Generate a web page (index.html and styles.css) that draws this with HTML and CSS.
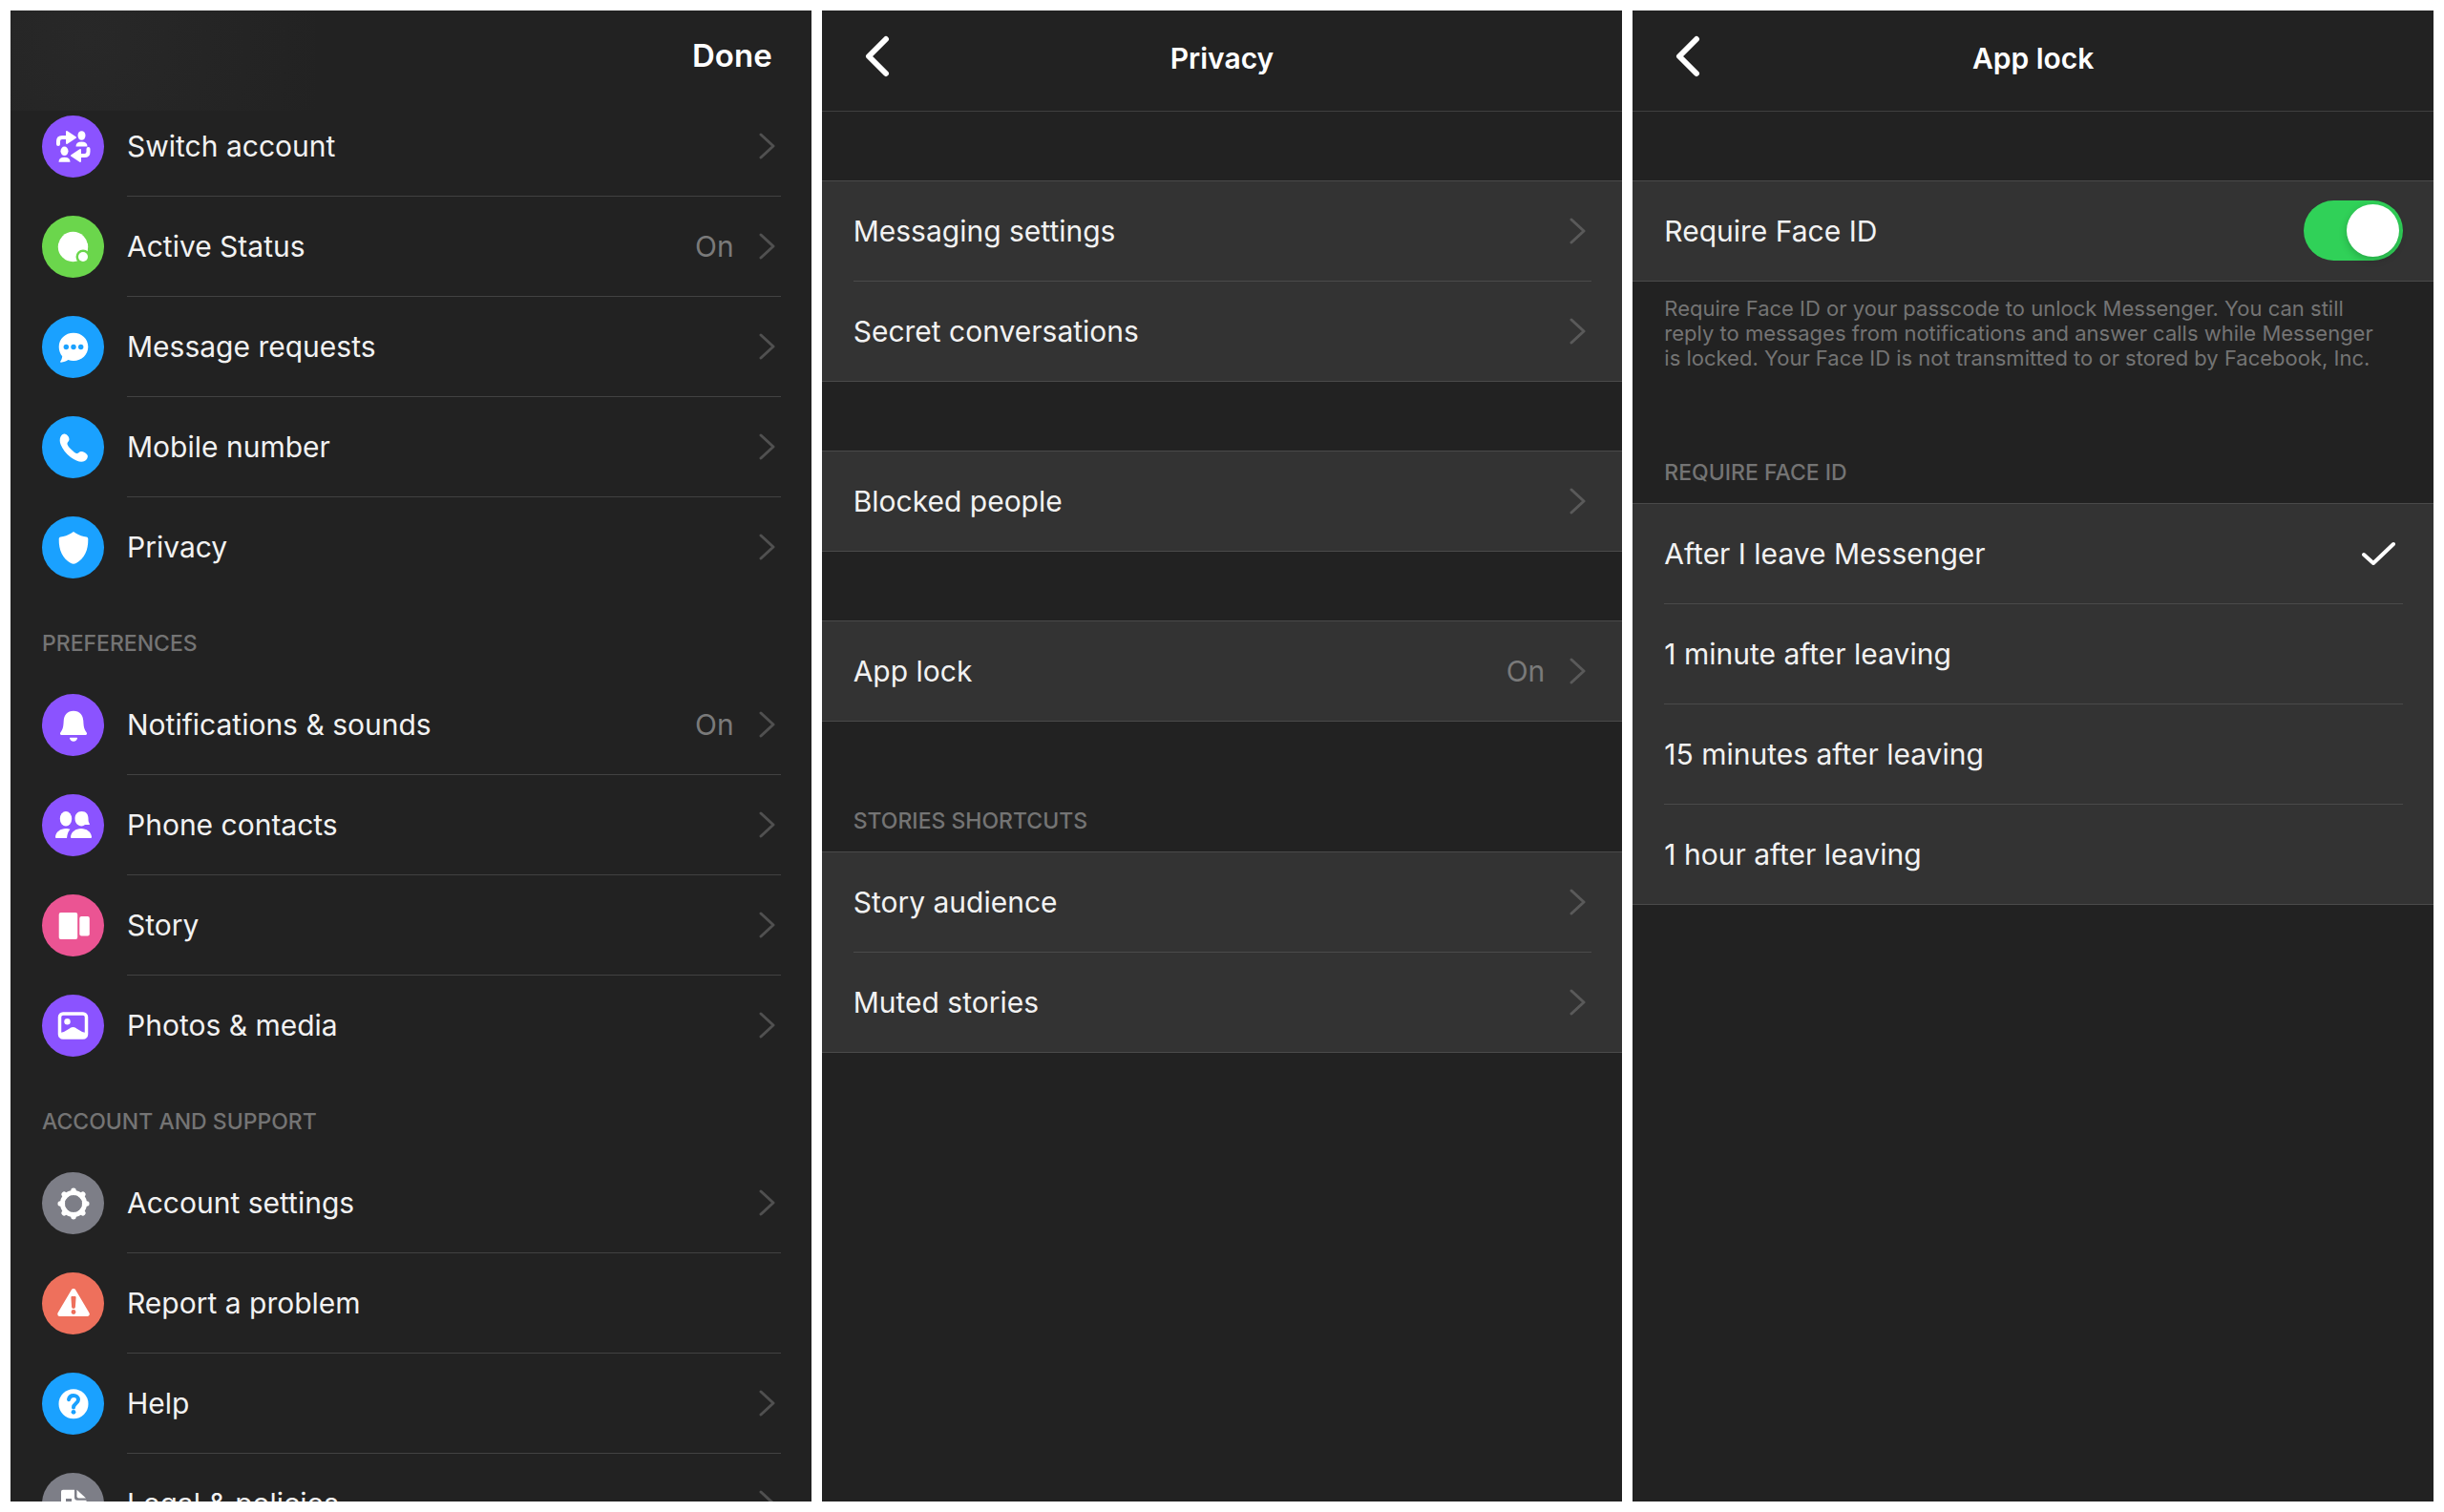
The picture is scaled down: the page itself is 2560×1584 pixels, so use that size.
FILE: index.html
```html
<!DOCTYPE html>
<html lang="en">
<head>
    <meta charset="UTF-8">
    <meta name="viewport" content="width=device-width, initial-scale=1.0">
    <title>Messenger settings</title>
    <link rel="stylesheet" href="styles.css">
</head>
<body>
    <!-- Shared chevron shapes -->
    <svg class="defs" aria-hidden="true">
        <symbol id="chevron" viewBox="0 0 18 28"><path d="M2 2l13 12L2 26" /></symbol>
        <symbol id="back" viewBox="0 0 26 44"><path d="M22 4L4 22l18 18" /></symbol>
    </svg>

    <div class="screens">
        <!-- Main settings -->
        <section class="screen screen-main">
            <header class="main-header">
                <button type="button" class="done">Done</button>
            </header>

            <nav class="list">
                <a class="row" href="#">
                    <svg class="icon purple" viewBox="0 0 65 65">
                        <path d="M17 30v-3q0-4 4-4h7" fill="none" stroke="#fff" stroke-width="4" stroke-linecap="round" />
                        <path d="M26 17l9 6-9 6z" stroke="#fff" stroke-width="2" stroke-linejoin="round" />
                        <ellipse cx="41.5" cy="21" rx="4" ry="4.8" />
                        <path d="M35.5 32.5q0-5 6-5t6 5z" />
                        <ellipse cx="23.5" cy="37.3" rx="4" ry="4.8" />
                        <path d="M17.5 48.7q0-5 6-5t6 5z" />
                        <path d="M48.5 35v3q0 4-4 4h-7" fill="none" stroke="#fff" stroke-width="4" stroke-linecap="round" />
                        <path d="M40 36l-9 6 9 6z" stroke="#fff" stroke-width="2" stroke-linejoin="round" />
                    </svg>
                    <span class="row-body">Switch account
                        <svg class="chevron"><use href="#chevron" /></svg>
                    </span>
                </a>
                <a class="row" href="#">
                    <svg class="icon green" viewBox="0 0 65 65">
                        <circle cx="32.5" cy="32.5" r="15.7" />
                        <circle cx="43" cy="43" r="7.5" class="cut" />
                        <circle cx="43" cy="43" r="5" />
                    </svg>
                    <span class="row-body">Active Status
                        <span class="value">On</span>
                        <svg class="chevron"><use href="#chevron" /></svg>
                    </span>
                </a>
                <a class="row" href="#">
                    <svg class="icon blue" viewBox="0 0 65 65">
                        <path d="M33 17.7c8.7 0 15.3 6.3 15.3 14.6S41.7 47 33 47c-2 0-4-.3-5.600-.9-2 1.300-4.700 2.500-7.500 2.600-.8 0-1-.6-.6-1.200 1-1.300 1.700-3 1.900-5.200-2.200-2.600-3.500-6-3.500-10 0-8.300 6.600-14.600 15.300-14.600z" />
                        <g class="cut">
                            <circle cx="25.3" cy="32.5" r="2.7" />
                            <circle cx="33" cy="32.5" r="2.7" />
                            <circle cx="40.7" cy="32.5" r="2.7" />
                        </g>
                    </svg>
                    <span class="row-body">Message requests
                        <svg class="chevron"><use href="#chevron" /></svg>
                    </span>
                </a>
                <a class="row" href="#">
                    <svg class="icon blue" viewBox="0 0 65 65">
                        <path d="M19.5 21.5c1-2 3-3.200 4.700-2.800 2.500.6 4.500 3.500 4.300 5.800-.1 1.500-1.500 2.300-2 3.700-.5 1.500 1.500 4 4 6.500s5 4.700 6.600 4.200c1.400-.5 2-1.800 3.600-2 2.300-.2 6.500 2 7.100 4.300.5 2-1 4.800-3.300 5.900-3 1.400-8.500.7-14.500-4-5-4-8.500-8.500-10.300-13-1.300-3.300-1.300-6.300-.2-8.600z" />
                    </svg>
                    <span class="row-body">Mobile number
                        <svg class="chevron"><use href="#chevron" /></svg>
                    </span>
                </a>
                <a class="row" href="#">
                    <svg class="icon blue" viewBox="0 0 65 65">
                        <path d="M33 16.3c.8 0 1.300.7 2.200 1.200 3.800 2.300 7.500 3.500 11.300 4 1.200.2 1.800 1 1.800 2.200.2 12-4 20.500-12.500 25.200-1.800 1-3.800 1-5.600 0-8.500-4.700-12.700-13.200-12.500-25.200 0-1.200.6-2 1.800-2.200 3.800-.5 7.500-1.700 11.300-4 .9-.5 1.400-1.200 2.200-1.200z" />
                    </svg>
                    <span class="row-body">Privacy
                        <svg class="chevron"><use href="#chevron" /></svg>
                    </span>
                </a>
            </nav>

            <h2 class="list-label">PREFERENCES</h2>
            <nav class="list">
                <a class="row" href="#">
                    <svg class="icon purple" viewBox="0 0 65 65">
                        <path d="M33 17.7c6.500 0 10 4.500 10.300 10.500.3 6.500 1 9 3.300 12 .9 1.300.4 2.800-1.200 2.800H20.600c-1.600 0-2.100-1.500-1.200-2.800 2.300-3 3-5.500 3.300-12 .3-6 3.800-10.500 10.300-10.500z" />
                        <path d="M29.5 45.7h7q.8 0 .5 1c-.8 2-2 3-4 3s-3.200-1-4-3q-.3-1 .5-1z" />
                    </svg>
                    <span class="row-body">Notifications &amp; sounds
                        <span class="value">On</span>
                        <svg class="chevron"><use href="#chevron" /></svg>
                    </span>
                </a>
                <a class="row" href="#">
                    <svg class="icon purple" viewBox="0 0 65 65">
                        <ellipse cx="25" cy="25.7" rx="6.2" ry="7.7" />
                        <path d="M41.5 18c5 0 7 3.500 7 7.500 0 2.500.3 4 1.300 5.500.3.600 0 1-.6 1H45q-1.500 1.400-3.500 1.400c-4 0-7-3.400-7-7.900 0-4.200 2.600-7.500 7-7.500z" />
                        <path d="M15 46q-1.200 0-1-1.500c.6-5 5.400-8.500 11-8.500 1.800 0 3 .2 4.500.7-2 2-3 5-3.500 9.300z" />
                        <path d="M31 46q-1.200 0-1-1.500c.6-5 5.400-8.500 11-8.500s10.400 3.500 11 8.500q.2 1.500-1 1.500z" />
                    </svg>
                    <span class="row-body">Phone contacts
                        <svg class="chevron"><use href="#chevron" /></svg>
                    </span>
                </a>
                <a class="row" href="#">
                    <svg class="icon pink" viewBox="0 0 65 65">
                        <rect x="17.7" y="19" width="19.5" height="28" rx="2" />
                        <rect x="39.3" y="23" width="10.5" height="20.5" rx="2" />
                    </svg>
                    <span class="row-body">Story
                        <svg class="chevron"><use href="#chevron" /></svg>
                    </span>
                </a>
                <a class="row" href="#">
                    <svg class="icon purple" viewBox="0 0 65 65">
                        <rect x="18.5" y="20" width="28" height="25" rx="3.5" fill="none" stroke="#fff" stroke-width="3.5" />
                        <circle cx="26.5" cy="28.3" r="3.2" />
                        <path d="M19 40q5-1 9-4 4.500-4 9 0 4 3 9 4v5H19z" />
                    </svg>
                    <span class="row-body">Photos &amp; media
                        <svg class="chevron"><use href="#chevron" /></svg>
                    </span>
                </a>
            </nav>

            <h2 class="list-label">ACCOUNT AND SUPPORT</h2>
            <nav class="list">
                <a class="row" href="#">
                    <svg class="icon grey" viewBox="0 0 65 65">
                        <circle cx="33" cy="33" r="11.5" fill="none" stroke="#fff" stroke-width="5" />
                        <!-- Gear teeth, one bar per pair of opposite teeth -->
                        <g stroke="#fff" stroke-width="5.5" stroke-linecap="round">
                            <path d="M33 19.2v3M33 43.8v3M19.2 33h3M43.8 33h3" />
                            <path d="M23.2 23.2l2 2M40.8 40.8l2 2M42.8 23.2l-2 2M25.2 40.8l-2 2" />
                        </g>
                        <circle cx="33" cy="33" r="9" class="cut" />
                    </svg>
                    <span class="row-body">Account settings
                        <svg class="chevron"><use href="#chevron" /></svg>
                    </span>
                </a>
                <a class="row" href="#">
                    <svg class="icon orange" viewBox="0 0 65 65">
                        <path d="M33 19.5L47.2 43.5H18.8z" stroke="#fff" stroke-width="5" stroke-linejoin="round" />
                        <path class="cut" d="M31.5 25h3q1.200 0 1.100 1.200l-.7 10q-.1 1.800-1.900 1.800t-1.900-1.800l-.7-10q-.1-1.200 1.100-1.200z" />
                        <circle cx="33" cy="41.5" r="2.4" class="cut" />
                    </svg>
                    <span class="row-body">Report a problem</span>
                </a>
                <a class="row" href="#">
                    <svg class="icon blue" viewBox="0 0 65 65">
                        <circle cx="33" cy="32.7" r="15.5" />
                        <path class="cut-line" d="M28 28.2c.5-3 2.500-4.200 5-4.200 3 0 5 1.700 5 4.300 0 4-5 4-5 8.200" />
                        <circle cx="33" cy="41.3" r="2.4" class="cut" />
                    </svg>
                    <span class="row-body">Help
                        <svg class="chevron"><use href="#chevron" /></svg>
                    </span>
                </a>
                <a class="row" href="#">
                    <svg class="icon grey" viewBox="0 0 65 65">
                        <path d="M22 17.7h12v8q0 3 3 3h9.500V46q0 2-2 2H22q-2 0-2-2V19.700q0-2 2-2z" />
                        <path d="M36.5 17.7L46 26.5h-7.500q-2 0-2-2z" />
                        <path class="cut" d="M25 27h6v3h-6zM25 34h16v3H25z" />
                    </svg>
                    <span class="row-body">Legal &amp; policies
                        <svg class="chevron"><use href="#chevron" /></svg>
                    </span>
                </a>
            </nav>
        </section>

        <!-- Privacy -->
        <section class="screen">
            <header class="header">
                <button type="button" class="back" aria-label="Back"><svg><use href="#back" /></svg></button>
                <h1 class="title">Privacy</h1>
            </header>

            <nav class="group">
                <a class="row" href="#"><span class="row-body">Messaging settings <svg class="chevron"><use href="#chevron" /></svg></span></a>
                <a class="row" href="#"><span class="row-body">Secret conversations <svg class="chevron"><use href="#chevron" /></svg></span></a>
            </nav>
            <nav class="group">
                <a class="row" href="#"><span class="row-body">Blocked people <svg class="chevron"><use href="#chevron" /></svg></span></a>
            </nav>
            <nav class="group">
                <a class="row" href="#">
                    <span class="row-body">App lock
                        <span class="value">On</span>
                        <svg class="chevron"><use href="#chevron" /></svg>
                    </span>
                </a>
            </nav>

            <h2 class="group-label">STORIES SHORTCUTS</h2>
            <nav class="group">
                <a class="row" href="#"><span class="row-body">Story audience <svg class="chevron"><use href="#chevron" /></svg></span></a>
                <a class="row" href="#"><span class="row-body">Muted stories <svg class="chevron"><use href="#chevron" /></svg></span></a>
            </nav>
        </section>

        <!-- App lock -->
        <section class="screen">
            <header class="header">
                <button type="button" class="back" aria-label="Back"><svg><use href="#back" /></svg></button>
                <h1 class="title">App lock</h1>
            </header>

            <div class="group">
                <div class="row">
                    <div class="row-body">
                        <label for="faceId">Require Face ID</label>
                        <input type="checkbox" role="switch" class="switch" id="faceId" checked>
                    </div>
                </div>
            </div>
            <p class="note">Require Face ID or your passcode to unlock Messenger. You can still reply to messages from notifications and answer calls while Messenger is locked. Your Face ID is not transmitted to or stored by Facebook, Inc.</p>

            <h2 class="group-label after-note">REQUIRE FACE ID</h2>
            <div class="group">
                <label class="row">
                    <span class="row-body">After I leave Messenger
                        <input type="radio" name="delay" value="0" checked>
                        <svg class="check" viewBox="0 0 36 26"><path d="M2 14l10 9L33 3" /></svg>
                    </span>
                </label>
                <label class="row">
                    <span class="row-body">1 minute after leaving
                        <input type="radio" name="delay" value="1">
                        <svg class="check" viewBox="0 0 36 26"><path d="M2 14l10 9L33 3" /></svg>
                    </span>
                </label>
                <label class="row">
                    <span class="row-body">15 minutes after leaving
                        <input type="radio" name="delay" value="15">
                        <svg class="check" viewBox="0 0 36 26"><path d="M2 14l10 9L33 3" /></svg>
                    </span>
                </label>
                <label class="row">
                    <span class="row-body">1 hour after leaving
                        <input type="radio" name="delay" value="60">
                        <svg class="check" viewBox="0 0 36 26"><path d="M2 14l10 9L33 3" /></svg>
                    </span>
                </label>
            </div>
        </section>
    </div>
</body>
</html>
```

FILE: styles.css
```css
* { box-sizing: border-box; }
body { margin: 0; background: #fff; color: #f2f2f2; font-family: Inter, "Liberation Sans", sans-serif; font-size: 30px; line-height: 36px; }
h1, h2, p { margin: 0; }
a { color: inherit; text-decoration: none; }
button { border: none; padding: 0; background: none; color: #fff; font: inherit; cursor: pointer; }
.defs { display: none; }

.screens { display: grid; grid-template-columns: repeat(3, 1fr); gap: 11px; height: 100vh; padding: 11px; }
.screen { background: #222; overflow: hidden; }
.screen-main { background: radial-gradient(circle at 25% 30%, #282828, #222) no-repeat #222; background-size: 320px 105px; }

/* Headers */
.main-header { display: flex; justify-content: flex-end; align-items: center; height: 90px; padding: 4px 41px 0 0; }
.done { font-size: 33px; font-weight: 600; }
.header { display: grid; grid-template-columns: 1fr auto 1fr; align-items: center; height: 106px; padding: 0 45px 10px; border-bottom: 1px solid #3f3f3f; }
.back { justify-self: start; height: 44px; }
.back svg { display: block; width: 26px; height: 44px; fill: none; stroke: #fff; stroke-width: 6px; stroke-linecap: round; stroke-linejoin: round; }
.title { padding-top: 4px; color: #fff; font-size: 30px; font-weight: 600; }

/* Rows */
.row { display: flex; gap: 24px; align-items: center; height: 105px; padding: 0 32px 0 33px; }
.row-body { display: flex; flex: 1; align-items: center; height: 105px; border-bottom: 1px solid #424242; }
.row:last-child .row-body { border-bottom-color: transparent; }
.value { margin-left: auto; color: #7a7a7a; }
.chevron { width: 18px; height: 28px; margin: 0 5px 0 auto; fill: none; stroke: #505050; stroke-width: 3px; stroke-linecap: round; stroke-linejoin: round; }
.value + .chevron { margin-left: 26px; }

/* Round icons, "cut" parts take the circle colour */
.icon { width: 65px; height: 65px; border-radius: 50%; background: var(--tint); fill: #fff; }
.cut { fill: var(--tint); }
.cut-line { fill: none; stroke: var(--tint); stroke-width: 4px; stroke-linecap: round; }
.purple { --tint: #8b53ff; }
.green { --tint: #6bd64c; }
.blue { --tint: #1aa1ff; }
.pink { --tint: #eb5493; }
.grey { --tint: #7d7e87; }
.orange { --tint: #ee705c; }

.list-label, .group-label { color: #747474; font-size: 23px; font-weight: 500; line-height: 26px; }
.list-label { height: 81px; padding: 35px 33px 0; }

/* Grouped cards */
.group { margin-top: 72px; background: #333; border-top: 1px solid #4a4a4a; }
.group .row-body { border-bottom-color: #4a4a4a; }
.group .row:last-child { border-bottom: 1px solid #4a4a4a; }
.group .row:last-child .row-body { border-bottom-color: transparent; }
.group .chevron { stroke: #5a5a5a; }
.group-label { padding: 91px 33px 19px; }
.group-label + .group { margin-top: 0; }
.note { padding: 15px 56px 0 33px; color: #747474; font-size: 22px; line-height: 26px; }
.after-note { padding-top: 94px; }

/* Controls */
.switch { appearance: none; display: flex; align-items: center; width: 104px; height: 63px; margin: 0 0 0 auto; padding: 4px; border-radius: 32px; background: #5a5a5a; cursor: pointer; }
.switch::before { content: ""; width: 55px; height: 55px; border-radius: 50%; background: #fff; box-shadow: 0 3px 8px rgba(0, 0, 0, 0.2); }
.switch:checked { justify-content: flex-end; background: #30d158; }
input[type="radio"] { appearance: none; width: 0; height: 0; margin: 0 0 0 auto; }
.check { display: none; width: 36px; height: 26px; margin-right: 7px; fill: none; stroke: #fff; stroke-width: 4px; stroke-linecap: round; stroke-linejoin: round; }
input:checked + .check { display: block; }
```
